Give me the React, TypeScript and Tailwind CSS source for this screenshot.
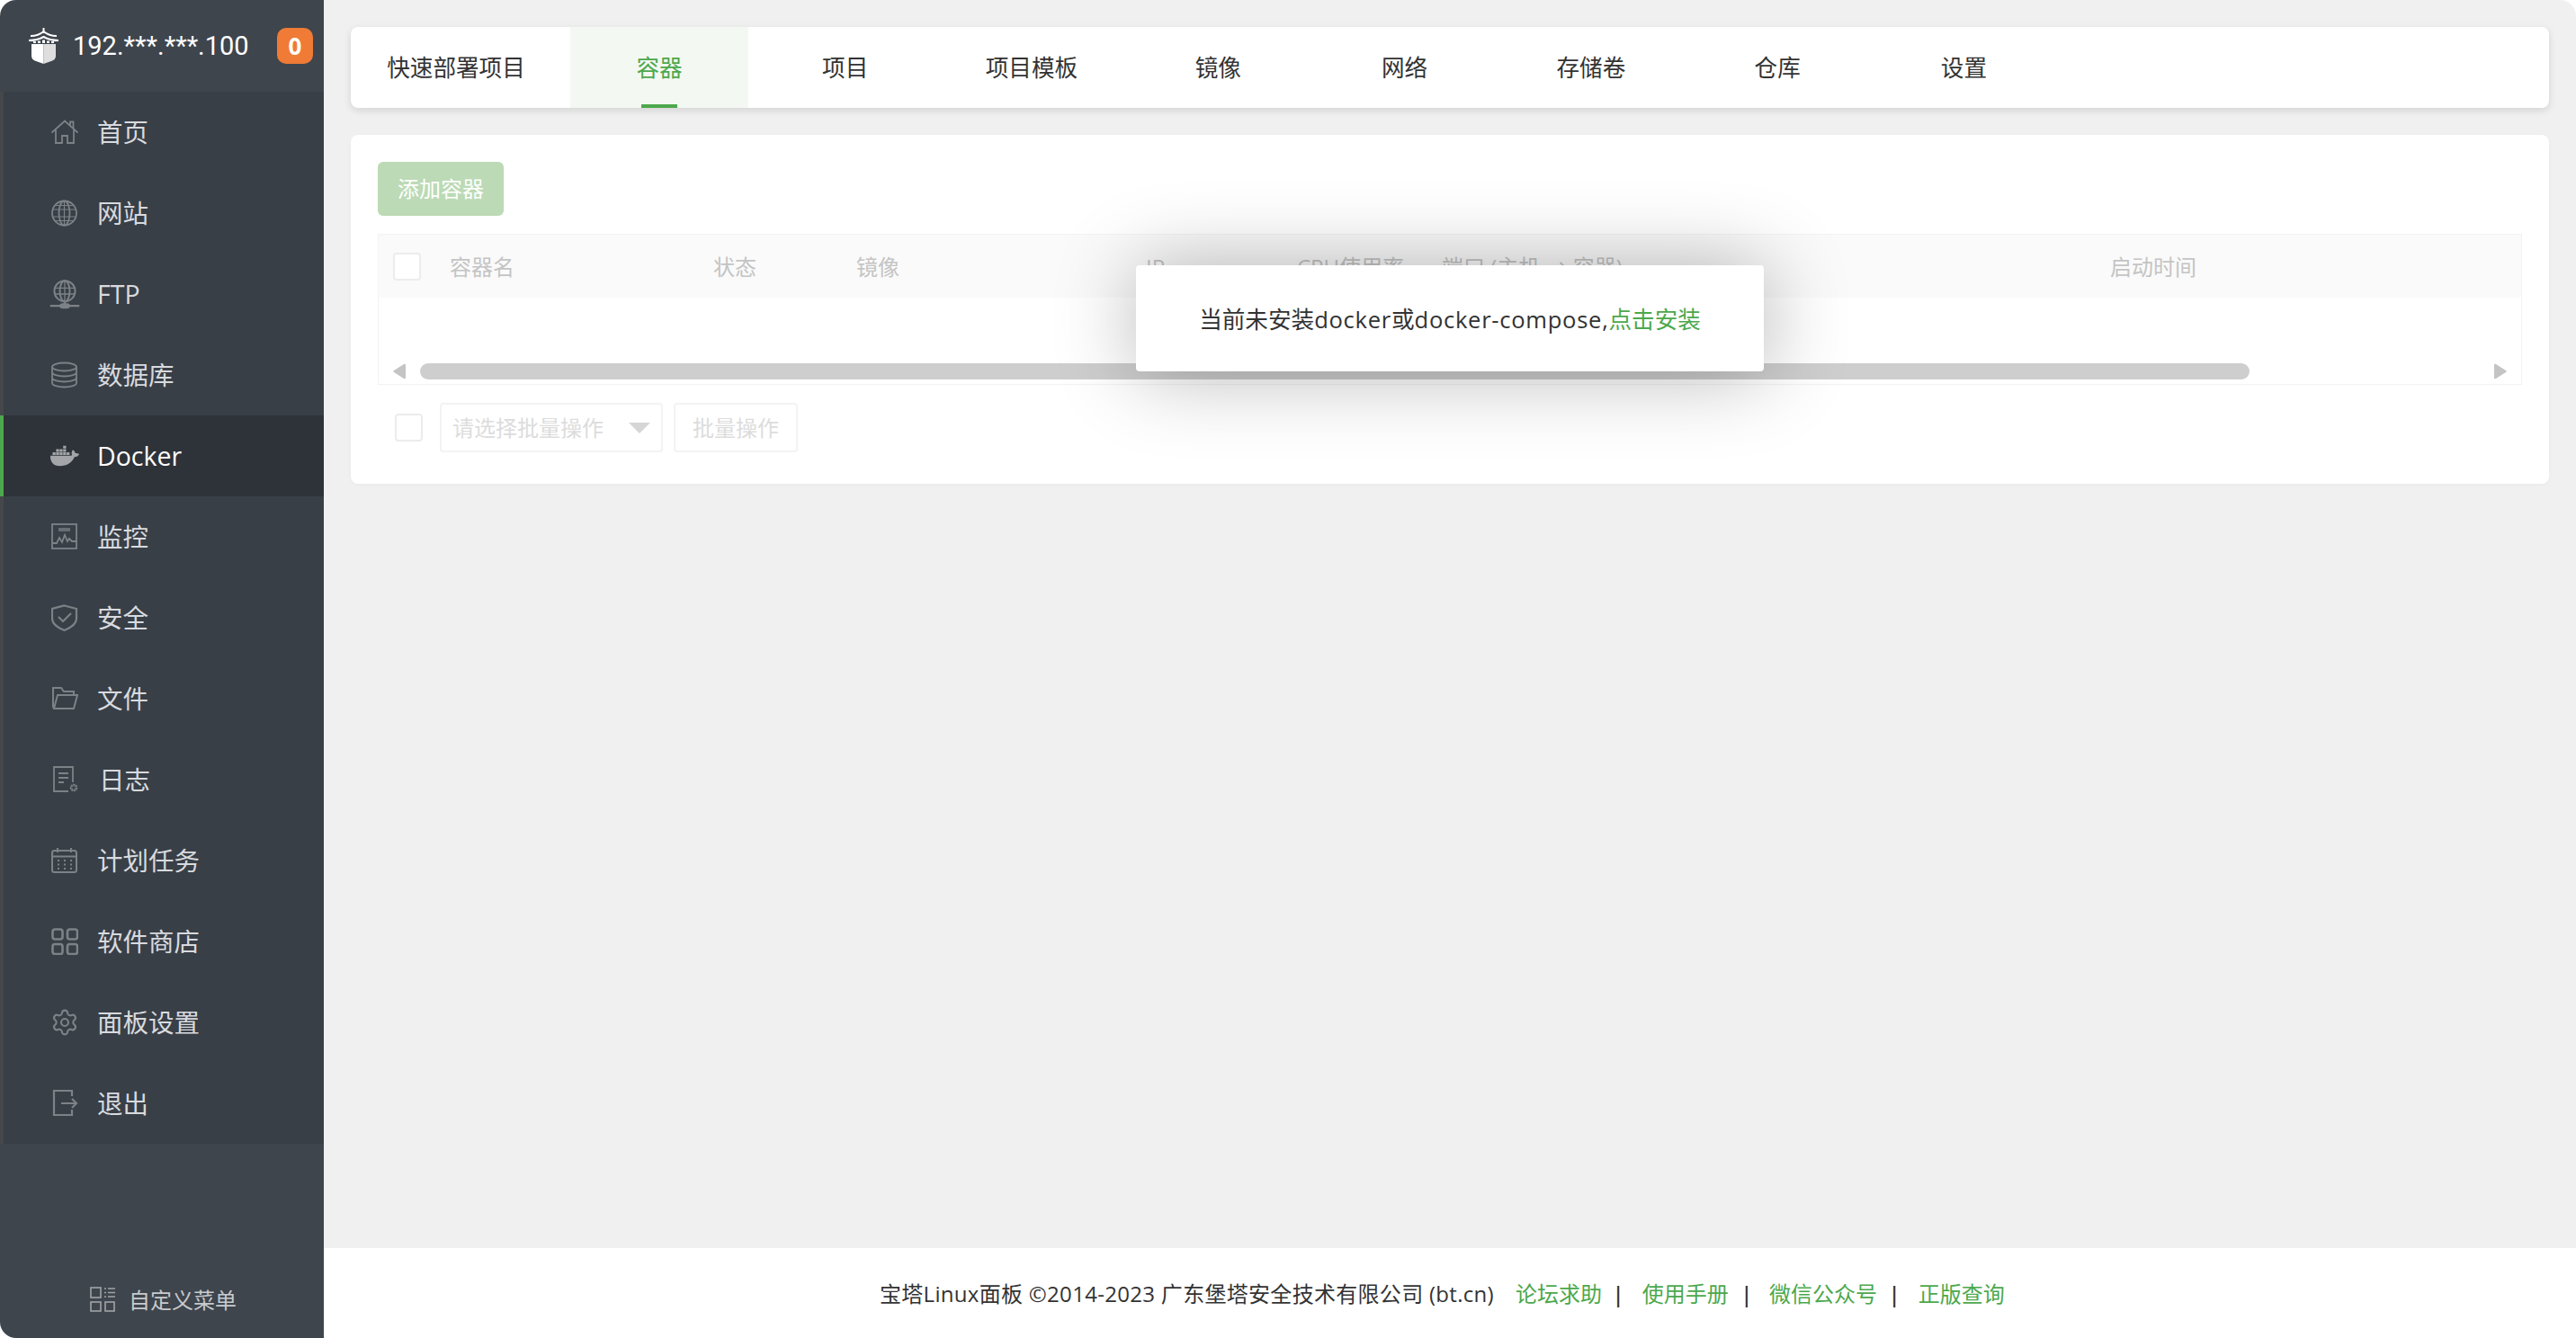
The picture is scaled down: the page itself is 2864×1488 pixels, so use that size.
import { FaDocker } from "react-icons/fa";
import { Settings } from "lucide-react";
import type { ReactNode } from "react";

const FONT = "[font-family:'Open_Sans','Noto_Sans_CJK_SC',sans-serif]";

const Line = ({ children, className = "" }: { children: ReactNode; className?: string }) => (
  <svg viewBox="0 0 30 30" fill="none" stroke="currentColor" strokeWidth="1.8" className={`h-[30px] w-[30px] ${className}`}>
    {children}
  </svg>
);

const menu: { label: string; icon: ReactNode; active?: boolean; indent?: boolean }[] = [
  {
    label: "首页",
    icon: (
      <Line>
        <path d="M0.500 15.500 15 2.500l14.500 13M5 12.500V27h7v-8h6v8h7V12.500M21 7V3.500h3.500v7" />
      </Line>
    ),
  },
  {
    label: "网站",
    icon: (
      <Line>
        <circle cx="14.500" cy="15" r="13.500" />
        <ellipse cx="14.500" cy="15" rx="6" ry="13.500" />
        <path d="M14.500 2v26M2 11h25M2 19h25M5 6.500h19M5 23.500h19" strokeWidth="1.200" />
      </Line>
    ),
  },
  {
    label: "FTP",
    icon: (
      <Line className="scale-110">
        <circle cx="15" cy="12" r="10.500" />
        <ellipse cx="15" cy="12" rx="5" ry="10.500" />
        <path d="M15 1.500v21M5 9h20M5 15h20" strokeWidth="1.200" />
        <path d="M0 27h30M15 23v4" strokeWidth="2" />
        <ellipse cx="15" cy="27" rx="4.500" ry="2" fill="currentColor" />
      </Line>
    ),
  },
  {
    label: "数据库",
    icon: (
      <Line>
        <ellipse cx="14.500" cy="6" rx="13.500" ry="4.500" />
        <path d="M1 6v18c0 2.500 6 4.500 13.500 4.500S28 26.500 28 24V6M1 12c0 2.500 6 4.500 13.500 4.500S28 14.500 28 12M1 18c0 2.500 6 4.500 13.500 4.500S28 20.500 28 18" />
      </Line>
    ),
  },
  {
    label: "Docker",
    active: true,
    icon: <FaDocker className="h-[32px] w-[33px] text-[#a3a5a8]" />,
  },
  {
    label: "监控",
    icon: (
      <Line>
        <rect x="1" y="1" width="27" height="27" />
        <path d="M1 22h5l3-6 3 5 3-8 3 7 2-3 3 3h5" />
        <rect x="8" y="5" width="13" height="4" fill="currentColor" stroke="none" opacity=".7" />
      </Line>
    ),
  },
  {
    label: "安全",
    icon: (
      <Line>
        <path d="M14.500 1.500 28 5v11c0 6-6 10-13.500 13C7 26 1 22 1 16V5z" strokeWidth="2.200" />
        <path d="m8 14 5 5 9-9" strokeWidth="2.200" />
      </Line>
    ),
  },
  {
    label: "文件",
    icon: (
      <Line>
        <path d="M3 26h22l4-15H7L3 26zM2 25V3h9l3 4h11v4" strokeWidth="2" />
      </Line>
    ),
  },
  {
    label: "日志",
    indent: true,
    icon: (
      <Line>
        <path d="M24 18V1H3v27h16M8 8h11M8 13h11M8 18h6" />
        <circle cx="25" cy="24" r="3" strokeWidth="2.600" strokeDasharray="2 .6" />
      </Line>
    ),
  },
  {
    label: "计划任务",
    icon: (
      <Line>
        <rect x="1" y="4" width="27" height="24" rx="2.500" strokeWidth="2" />
        <path d="M1 10.500h27M7 1v5M22 1v5" strokeWidth="2" />
        <path d="M7 15h2M14 15h2M21 15h2M7 19.500h2M14 19.500h2M21 19.500h2M7 24h2M14 24h2M21 24h2" />
      </Line>
    ),
  },
  {
    label: "软件商店",
    icon: (
      <Line>
        <rect x="1.500" y="1.500" width="11" height="11" rx="2.500" strokeWidth="2.600" />
        <rect x="18" y="1.500" width="11" height="11" rx="2.500" strokeWidth="2.600" />
        <rect x="1.500" y="18" width="11" height="11" rx="2.500" strokeWidth="2.600" />
        <rect x="18" y="18" width="11" height="11" rx="2.500" strokeWidth="2.600" />
      </Line>
    ),
  },
  {
    label: "面板设置",
    icon: <Settings className="h-[32px] w-[32px]" strokeWidth={1.6} />,
  },
  {
    label: "退出",
    icon: (
      <Line>
        <path d="M23 7V1H3v27h20v-6M11 15h17M23 10l5 5-5 5" strokeWidth="2.200" />
      </Line>
    ),
  },
];

const tabs = ["项目", "项目模板", "镜像", "网络", "存储卷", "仓库", "设置"];

const Checkbox = () => (
  <span className="block h-[31px] w-[31px] rounded-[4px] border-2 border-[#ececec] bg-white" />
);

const App = () => {
  return (
    <div className={`flex h-[1488px] w-[2864px] overflow-hidden rounded-[18px] bg-white ${FONT}`}>
      {/* Sidebar */}
      <aside className="flex h-full w-[360px] shrink-0 flex-col bg-[#3e454d]">
        <div className="flex h-[102px] items-center pl-[32px] pr-[12px]">
          <svg viewBox="0 0 33 40" className="h-[40px] w-[33px]">
            <path d="M16.500 0v6" stroke="#fff" strokeWidth="2" />
            <path d="M2 9c6 0 11-2 14.500-5C20 7 25 9 31 9" stroke="#fff" strokeWidth="1.800" fill="none" />
            <path d="M0 14c7 0 12-1.500 16.500-4C21 12.500 26 14 33 14" stroke="#fff" strokeWidth="2.200" fill="none" />
            <path d="M5 15h3v2H5zM10 14.500h3v2.500h-3zM15 13.500h3V17h-3zM20 14.500h3V17h-3zM25 15h3v2h-3z" fill="#fff" />
            <path d="M3 18h13.500v22L8 37c-3.500-1.300-5-3-5-6z" fill="#fff" />
            <path d="M16.500 18H30v13c0 3-1.500 4.700-5 6l-8.500 3z" fill="#dedede" />
          </svg>
          <span className="ml-[16px] text-[29px] leading-none text-white [font-family:Roboto,sans-serif]">192.***.***.100</span>
          <span className="ml-auto flex h-[40px] w-[40px] items-center justify-center rounded-[10px] bg-[#ef7b36] text-[26px] font-bold leading-none text-white">
            0
          </span>
        </div>

        <nav className="border-l-[4px] border-[#45484b] bg-[#393f47]">
          {menu.map((item) => (
            <a
              key={item.label}
              className={`relative -ml-[4px] flex h-[90px] items-center pl-[56px] text-[28.500px] leading-none ${
                item.active ? "bg-[#2e3239] text-white" : "text-[#d8dade]"
              }`}
            >
              {item.active && <span className="absolute inset-y-0 left-0 w-[4px] bg-[#4ca84c]" />}
              <span className="flex h-[32px] w-[32px] items-center justify-center text-[#7d8287]">{item.icon}</span>
              <span className={item.indent ? "ml-[22px]" : "ml-[20px]"}>{item.label}</span>
            </a>
          ))}
        </nav>

        <div className="mt-auto flex h-[57px] items-start justify-center pb-[15px] pl-[3px] text-[24px] leading-[30px] text-[#c8cacd]">
          <svg viewBox="0 0 28 28" fill="none" stroke="#a2a4a7" strokeWidth="1.600" className="h-[28px] w-[28px]">
            <rect x="1" y="1" width="11" height="11" />
            <rect x="1" y="17" width="11" height="10" />
            <rect x="17" y="17" width="10" height="10" />
            <path d="M16 2h2M20 2h8M16 6.500h2M20 6.500h8M16 11h2M20 11h8" />
          </svg>
          <span className="ml-[15px]">自定义菜单</span>
        </div>
      </aside>

      {/* Main */}
      <main className="flex min-w-0 flex-1 flex-col">
        <div className="relative flex-1 bg-[#f0f0f0] px-[30px] pt-[30px]">
          <div className="flex h-[90px] overflow-hidden rounded-[8px] bg-white text-[25.600px] text-[#333] shadow-[0_3px_8px_rgba(0,0,0,0.12)]">
            <div className="flex w-[244px] items-center justify-center pr-[10px] pt-[2px]">快速部署项目</div>
            <div className="relative mr-[4px] flex w-[198px] items-center justify-center bg-[#f3f8f3] pt-[2px] text-[#4ca84c]">
              容器
              <span className="absolute bottom-0 left-[79px] h-[4px] w-[40px] bg-[#4ca84c]" />
            </div>
            {tabs.map((tab) => (
              <div key={tab} className="flex w-[207.300px] items-center justify-center pt-[2px]">
                {tab}
              </div>
            ))}
          </div>

          <div className="mt-[30px] h-[388px] rounded-[8px] bg-white p-[30px] text-[24px] shadow-[0_1px_4px_rgba(0,0,0,0.03)]">
            <button className="flex h-[60px] w-[140px] items-center justify-center rounded-[6px] bg-[#bbdab5] text-white">
              添加容器
            </button>

            <div className="mt-[20px] h-[168px] border border-[#f3f3f3]">
              <div className="flex h-[70px] items-center bg-[#fafafa] pt-[1px] text-[#c4c4c4]">
                <div className="w-[79px] pl-[16px]">
                  <Checkbox />
                </div>
                <div className="w-[293px]">容器名</div>
                <div className="w-[159px]">状态</div>
                <div className="w-[322px]">镜像</div>
                <div className="w-[168px]">IP</div>
                <div className="w-[161px]">CPU使用率</div>
                <div className="w-[743px]">端口 (主机 → 容器)</div>
                <div>启动时间</div>
              </div>
              <div className="mt-[73px] flex h-[18px] items-center px-[16px]">
                <svg viewBox="0 0 14 18" className="h-[18px] w-[14px]" fill="#c4c4c4">
                  <path d="M12 1 1 8a1.200 1.200 0 0 0 0 2l11 7c1 .6 2 0 2-1V2c0-1-1-1.600-2-1z" />
                </svg>
                <div className="ml-[16px] h-[18px] w-[2034px] rounded-[9px] bg-[#cecece]" />
                <svg viewBox="0 0 14 18" className="ml-auto h-[18px] w-[14px]" fill="#c4c4c4">
                  <path d="M2 1l11 7a1.200 1.200 0 0 1 0 2L2 17c-1 .6-2 0-2-1V2c0-1 1-1.600 2-1z" />
                </svg>
              </div>
            </div>

            <div className="mt-[20px] flex h-[55px] items-center text-[#dcdcdc]">
              <div className="ml-[19px]">
                <Checkbox />
              </div>
              <div className="ml-[19px] flex h-full w-[248px] items-center rounded-[4px] border-2 border-[#f3f3f3] pl-[12px]">
                请选择批量操作
                <span className="ml-auto mr-[12px] h-0 w-0 border-x-[12px] border-t-[12px] border-x-transparent border-t-[#d6d6d6]" />
              </div>
              <div className="ml-[12px] flex h-full w-[138px] items-center justify-center rounded-[4px] border-2 border-[#f3f3f3]">
                批量操作
              </div>
            </div>
          </div>

          {/* Install prompt */}
          <div className="absolute left-[903px] top-[295px] flex h-[118px] w-[698px] items-center justify-center rounded-[4px] bg-white pt-[5px] text-[25.600px] text-[#333] shadow-[2px_2px_91px_rgba(0,0,0,0.3)]">
            <span>
              当前未安装<span className="tracking-[0.7px]">docker</span>或
              <span className="tracking-[0.7px]">docker-compose,</span>
              <a className="text-[#4ca84c]">点击安装</a>
            </span>
          </div>
        </div>

        <footer className="flex h-[100px] shrink-0 items-center bg-white pl-[618px] pt-[2px] text-[24px] text-[#333]">
          <span className="tracking-[0.3px]">宝塔Linux面板 ©2014-2023 广东堡塔安全技术有限公司 (bt.cn)</span>
          <a className="ml-[24px] text-[#4ca84c]">论坛求助</a>
          <span className="ml-[11.500px] font-semibold">|</span>
          <a className="ml-[20px] text-[#4ca84c]">使用手册</a>
          <span className="ml-[13.500px] font-semibold">|</span>
          <a className="ml-[18.500px] text-[#4ca84c]">微信公众号</a>
          <span className="ml-[12.500px] font-semibold">|</span>
          <a className="ml-[20px] text-[#4ca84c]">正版查询</a>
        </footer>
      </main>
    </div>
  );
};

export default App;
